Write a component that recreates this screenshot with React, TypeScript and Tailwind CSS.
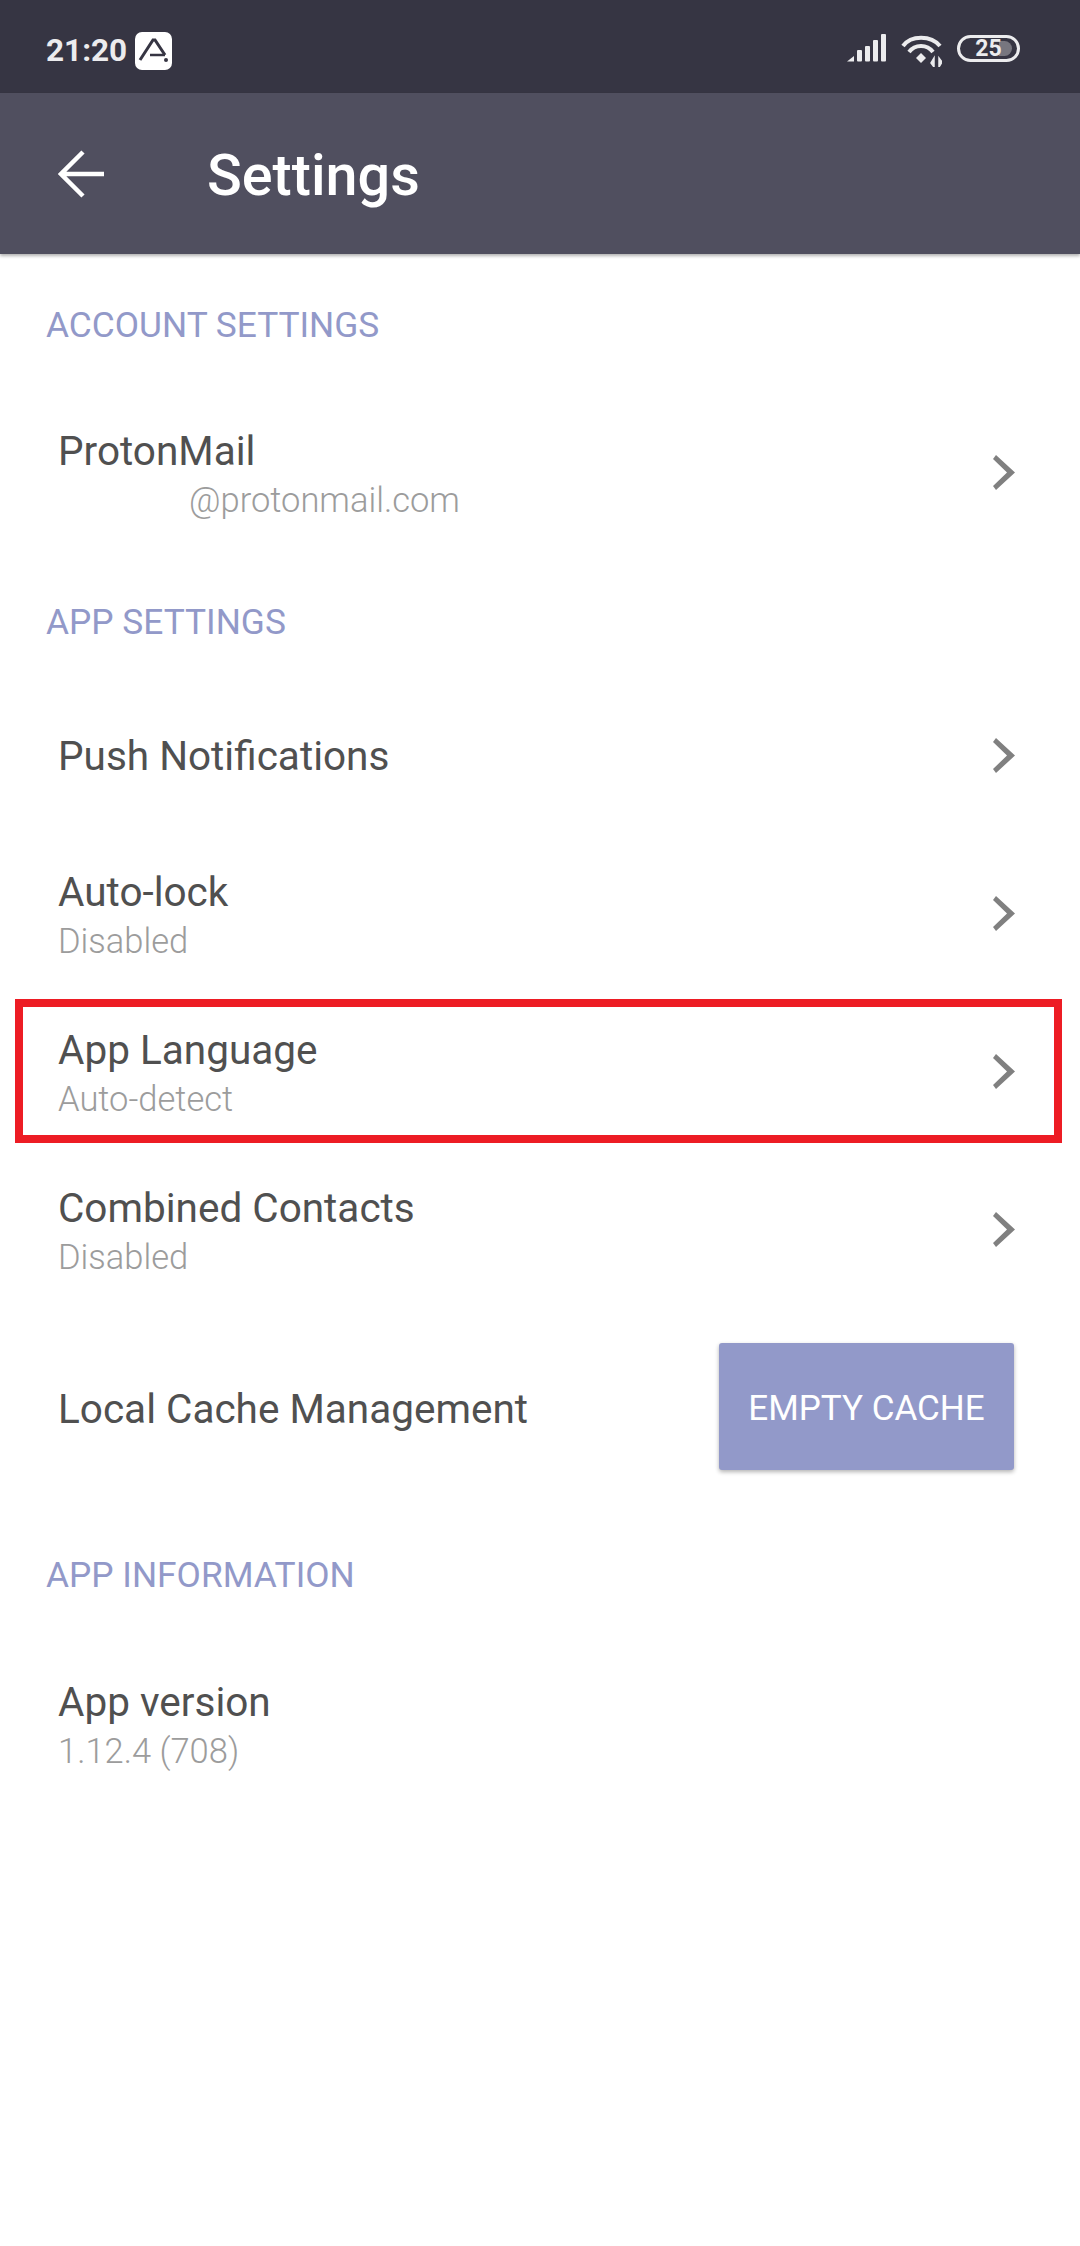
import * as React from 'react';

const SectionLabel: React.FC<{ text: string; className: string }> = ({ text, className }) => (
    <div className={`pl-[46px] text-[35.3px] leading-[44px] text-[#9299c9] ${className}`}>{text}</div>
);

const Chevron = () => (
    <svg width="22" height="35" viewBox="0 0 22 35" className="shrink-0">
        <path d="M3 0 L22 17.5 L3 35 L0 31 L14 17.5 L0 4 Z" fill="#808080" />
    </svg>
);

interface RowProps {
    title: string;
    sub?: string;
    subClass?: string;
    chevron?: boolean;
    highlighted?: boolean;
}

const Row: React.FC<RowProps> = ({ title, sub, subClass = '', chevron = true, highlighted = false }) => (
    <div className="relative flex h-[158px] items-center justify-between pl-[58px] pr-[65px]">
        <div className={`flex flex-col ${sub ? 'pt-[6px]' : 'pt-[2px]'}`}>
            <span className="text-[40.5px] leading-[50px] text-[#505050]">{title}</span>
            {sub && <span className={`text-[34.5px] font-light leading-[49px] text-[#9c9c9c] ${subClass}`}>{sub}</span>}
        </div>
        {chevron && <Chevron />}
        {highlighted && <div className="absolute left-[15px] right-[18px] top-[7px] h-[144px] border-8 border-[#ed1c24]" />}
    </div>
);

const StatusBar = () => (
    <div className="flex h-[93px] items-center justify-between bg-[#363543] pl-[46px] pr-[60px]">
        <div className="flex items-center gap-[8px] pt-[9px]">
            <span className="text-[31.5px] font-bold leading-none text-[#ececee]">21:20</span>
            <svg width="37" height="38" viewBox="0 0 37 38">
                <rect width="37" height="38" rx="7" fill="white" />
                <path d="M5 28 L18 8 L20 8 L30 23" fill="none" stroke="#363543" strokeWidth="3" />
                <path d="M15 23 H30" stroke="#363543" strokeWidth="2.5" />
                <circle cx="31" cy="28" r="2" fill="#363543" />
            </svg>
        </div>
        <div className="flex items-start gap-[15px] pt-[8px]">
            <svg width="39" height="28" viewBox="0 0 39 28" fill="#ececee">
                <path d="M0 27.5 L7 22 V27.5 Z" />
                <rect x="10" y="16" width="5" height="11.5" rx="1" />
                <rect x="18" y="12" width="5" height="15.5" rx="1" />
                <rect x="26" y="6" width="5" height="21.5" rx="1" />
                <rect x="34" y="0" width="5" height="27.5" rx="1" />
            </svg>
            <svg width="41" height="33" viewBox="0 0 41 33" fill="none" stroke="#ececee" strokeWidth="4">
                <path d="M2 12 C10 1 30 1 39 12" />
                <path d="M8 18 C14 10 26 10 32 18" />
                <path d="M15 24 L20 19 L25 24 L20 29 Z" fill="#ececee" stroke="none" />
                <path d="M33 24 V33 L30 29 Z M38 33 V24 L41 28 Z" fill="#ececee" strokeWidth="1.5" />
            </svg>
            <div className="relative mt-px flex h-[27px] w-[63px] items-center justify-center overflow-hidden rounded-full border-[3px] border-[#ececee]">
                <div className="absolute right-[5px] top-[3px] h-[15px] w-[13px] rounded-r-full bg-[#77767f]" />
                <span className="relative text-[23px] font-bold leading-none text-[#ececee]">25</span>
            </div>
        </div>
    </div>
);

const App: React.FC = () => (
    <div className="min-h-[2246px] bg-white font-['Roboto',sans-serif]">
        <StatusBar />
        <header className="relative flex h-[161px] items-center bg-[#504f5f] pl-[58px] shadow-[0_2px_3px_rgba(0,0,0,0.3)]">
            <svg width="46" height="48" viewBox="0 0 46 48" fill="none" stroke="white" strokeWidth="4.5" className="shrink-0">
                <path d="M46 24 H3 M25 2 L3 24 L25 46" />
            </svg>
            <h1 className="ml-[103px] pt-[5px] text-[57.5px] font-medium leading-none text-white">Settings</h1>
        </header>

        <SectionLabel text="ACCOUNT SETTINGS" className="pt-[49px] pb-[46px]" />
        <Row title="ProtonMail" sub="@protonmail.com" subClass="pl-[131px]" />

        <SectionLabel text="APP SETTINGS" className="pt-[49px] pb-[32px]" />
        <Row title="Push Notifications" />
        <Row title="Auto-lock" sub="Disabled" />
        <Row title="App Language" sub="Auto-detect" highlighted />
        <Row title="Combined Contacts" sub="Disabled" />

        <div className="flex h-[197px] items-center justify-between pl-[58px] pr-[65px]">
            <span className="pt-[5px] text-[40.5px] text-[#505050]">Local Cache Management</span>
            <button className="mr-[1px] h-[127px] w-[295px] rounded-[3px] bg-[#9299c9] pt-[5px] text-[35px] text-white shadow-[0_2px_4px_rgba(0,0,0,0.3)]">EMPTY CACHE</button>
        </div>

        <SectionLabel text="APP INFORMATION" className="pt-[48px] pb-[47px]" />
        <Row title="App version" sub="1.12.4 (708)" chevron={false} />
    </div>
);

export default App;
